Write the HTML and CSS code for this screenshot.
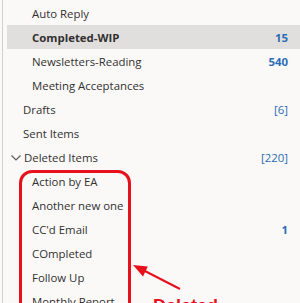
FILE: index.html
```html
<!DOCTYPE html>
<html>
<head>
<meta charset="utf-8">
<link rel="stylesheet" href="styles.css">
</head>
<body>
<div class="pane">
  <div class="row l2"><span class="name">Auto Reply</span></div>
  <div class="row l2 selected"><span class="name bold">Completed-WIP</span><span class="count bold">15</span></div>
  <div class="row l2"><span class="name">Newsletters-Reading</span><span class="count bold">540</span></div>
  <div class="row l2"><span class="name">Meeting Acceptances</span></div>
  <div class="row l1"><span class="name">Drafts</span><span class="count">[6]</span></div>
  <div class="row l1"><span class="name">Sent Items</span></div>
  <div class="row l1 parent"><svg class="chev" width="10" height="6" viewBox="0 0 10 6"><path d="M0.5 0.5 L5 5 L9.5 0.5" fill="none" stroke="#605e5c" stroke-width="1.2"/></svg><span class="name">Deleted Items</span><span class="count">[220]</span></div>
  <div class="row l2"><span class="name">Action by EA</span></div>
  <div class="row l2"><span class="name">Another new one</span></div>
  <div class="row l2"><span class="name">CC'd Email</span><span class="count bold">1</span></div>
  <div class="row l2"><span class="name">COmpleted</span></div>
  <div class="row l2"><span class="name">Follow Up</span></div>
  <div class="row l2"><span class="name">Monthly Report</span></div>
</div>
<div class="redbox"></div>
<svg class="arrow" width="300" height="303" viewBox="0 0 300 303">
  <line x1="180" y1="289" x2="142" y2="269.5" stroke="#e8101a" stroke-width="2"/>
  <polygon points="133,265 147.8,266.5 143,276.5" fill="#e8101a"/>
</svg>
<div class="label">Deleted</div>
</body>
</html>
```

FILE: styles.css
```css
html, body {
  margin: 0;
  padding: 0;
  background: #faf9f8;
  width: 300px;
  height: 303px;
  overflow: hidden;
  position: relative;
}
.pane {
  margin-left: 2px;
  border-left: 1px solid #d2d0ce;
  padding-top: 1px;
  padding-left: 4px;
  height: 400px;
  font-family: "Open Sans", sans-serif;
  font-size: 11.4px;
  color: #323130;
}
.row {
  height: 24px;
  display: flex;
  align-items: center;
  padding-right: 12px;
}
.row.l2 { padding-left: 25px; }
.row.l1 { padding-left: 16px; }
.row.parent { padding-left: 4px; }
.chev { margin-right: 3px; margin-top: 1px; }
.selected { background: #e1dfdd; }
.name { flex: 1; white-space: nowrap; }
.bold { font-weight: 700; }
.count { color: #2b6cb5; }
.redbox {
  position: absolute;
  left: 19px;
  top: 170px;
  width: 106px;
  height: 200px;
  border: 3px solid #e8101a;
  border-radius: 13px;
}
.arrow {
  position: absolute;
  left: 0;
  top: 0;
}
.label {
  position: absolute;
  left: 153px;
  top: 296px;
  font-family: "Liberation Sans", Arial, sans-serif;
  font-weight: 700;
  font-size: 18px;
  line-height: 20px;
  color: #e8101a;
}
```
